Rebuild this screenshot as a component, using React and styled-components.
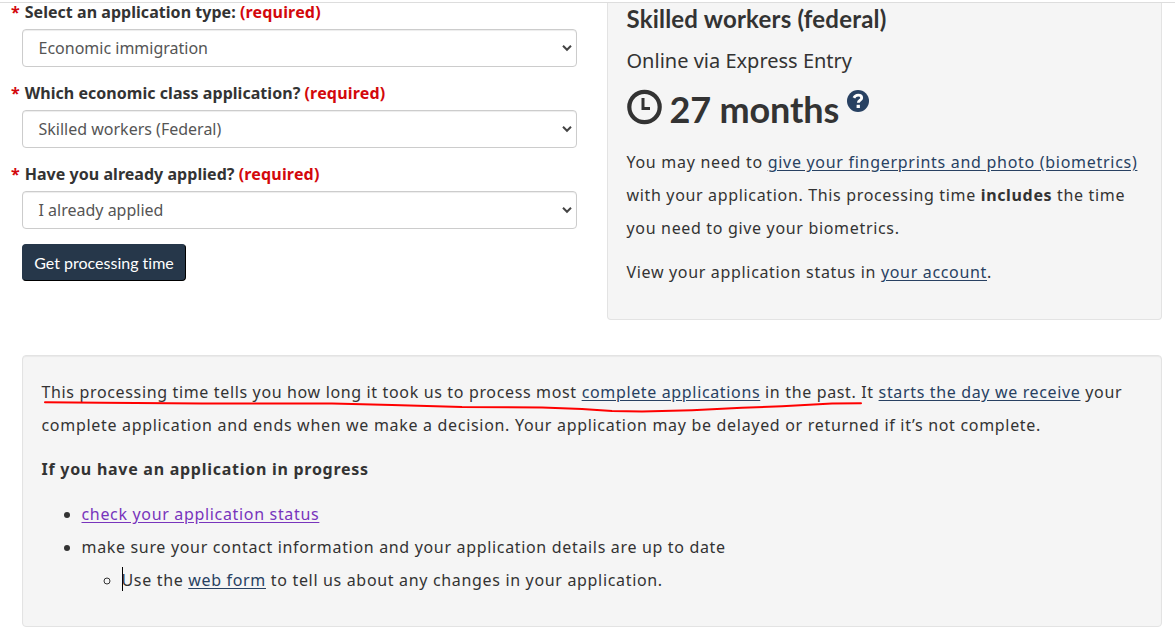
import React from 'react';
import styled, { createGlobalStyle } from 'styled-components';

const GlobalStyle = createGlobalStyle`
  * {
    box-sizing: border-box;
  }
  body {
    margin: 0;
    background-color: white;
    color: #333;
    font-family: 'Noto Sans', sans-serif;
    font-size: 16px;
    overflow: hidden;
  }
`

const Page = styled.div`
  width: 1175px;
  height: 641px;
  padding-top: 2px;
  overflow: hidden;
`

const Content = styled.main`
  border-top: 1px solid #ddd;
  padding: 0 13px 0 22px;
`

const Columns = styled.div`
  display: grid;
  grid-template-columns: 555px 555px;
  column-gap: 30px;
  height: 317px;
  margin-bottom: 35px;
`

//Form

const Form = styled.form`
  display: flex;
  flex-direction: column;
  align-items: flex-start;
`

const Field = styled.div`
  width: 100%;
  height: 81px;
`

const Label = styled.label`
  display: block;
  height: 26px;
  margin-left: -11px;
  font-weight: 700;
  line-height: 18px;
  white-space: nowrap;
  letter-spacing: 0.04px;
`

const Required = styled.span`
  color: #d3080c;
  letter-spacing: 0.18px;
`

const Star = styled.span`
  margin-right: 5px;
  color: #d3080c;
`

const SelectBox = styled.div`
  display: flex;
  align-items: center;
  justify-content: space-between;
  height: 38px;
  padding: 0 3px 0 15.5px;
  border: 1px solid #ccc;
  border-radius: 4px;
  box-shadow: inset 0 1px 1px rgba(0, 0, 0, 0.075);
  color: #555;
  background-color: white;
`

const SubmitButton = styled.button`
  width: 164px;
  height: 37px;
  margin-top: -2px;
  padding: 0 0 1px;
  border: 1px solid #26374a;
  border-right-color: black;
  border-bottom-color: black;
  border-radius: 4px;
  background-color: #26374a;
  color: white;
  font-family: Lato, sans-serif;
  font-size: 16px;
  font-variant-ligatures: none;
  white-space: nowrap;
`

//Result panels

const Panel = styled.section`
  background-color: #f5f5f5;
  border: 1px solid #e3e3e3;
  border-radius: 4px;
  box-shadow: inset 0 1px 1px rgba(0, 0, 0, 0.05);
  padding: 0 18.5px;
`

const ResultPanel = styled(Panel)`
  border-top: none;
  border-top-left-radius: 0;
  border-top-right-radius: 0;
  box-shadow: none;
`

const InfoPanel = styled(Panel)`
  height: 272px;
  padding-top: 20px;
`

const ResultTitle = styled.h2`
  margin: 0;
  font-family: Lato, sans-serif;
  font-size: 24px;
  font-weight: 700;
  line-height: 32px;
  letter-spacing: 0.2px;
`

const ResultMethod = styled.p`
  margin: 0;
  padding-top: 10px;
  font-size: 20px;
  line-height: 32px;
`

const ResultTime = styled.div`
  display: flex;
  align-items: flex-start;
  height: 69px;
  padding-top: 12px;
`

const TimeText = styled.span`
  margin: 0 8px 0 8px;
  font-family: Lato, sans-serif;
  font-size: 36px;
  font-weight: 700;
  line-height: 40px;
  letter-spacing: -0.15px;
`

const Text = styled.p`
  margin: 0 0 11px;
  line-height: 33px;
  letter-spacing: 0.67px;
  white-space: nowrap;
`

const Line = styled.span`
  letter-spacing: ${props => props.$spacing};
`

const Link = styled.a`
  color: ${props => props.$visited ? '#7834bc' : '#284162'};
  text-decoration: underline;
  text-underline-offset: 2px;
`

const List = styled.ul`
  margin: 0;
  padding-left: 40px;
  line-height: 33px;
  letter-spacing: 0.67px;
`

const MainList = styled(List)`
  margin-top: 12px;
`

const Cursor = styled.span`
  display: inline-block;
  width: 1px;
  height: 24px;
  margin-right: -1px;
  vertical-align: -5px;
  background-color: black;
`

const Marked = styled.span`
  position: relative;
`

const RedLine = styled.svg`
  position: absolute;
  left: 0;
  top: 16px;
  overflow: visible;
`

const Chevron = () => (
  <svg width="12" height="8" viewBox="0 0 12 8">
    <path d="M2 1.8 L6 5.8 L10 1.8" fill="none" stroke="#444" strokeWidth="2" />
  </svg>
)

const ClockIcon = () => (
  <svg width="35" height="36" viewBox="0 0 35 36">
    <circle cx="17.5" cy="18" r="15.2" fill="none" stroke="#333" strokeWidth="4.2" />
    <path d="M16 9 V19.5 H23" fill="none" stroke="#333" strokeWidth="3" />
  </svg>
)

const HelpIcon = () => (
  <svg width="22" height="24" viewBox="0 -1 22 24">
    <circle cx="11" cy="11" r="11" fill="#284162" />
    <path d="M6.9 7.9 C8 5.6 9.4 5.1 11.2 5.1 C13.4 5.1 14.7 6.3 14.7 7.9 C14.7 10 11.3 10.2 11.3 12.8" fill="none" stroke="white" strokeWidth="2.8" />
    <rect x="9.6" y="14.8" width="3.3" height="3.2" fill="white" />
  </svg>
)

const fields = [
  { label: 'Select an application type:', value: 'Economic immigration' },
  { label: 'Which economic class application?', value: 'Skilled workers (Federal)' },
  { label: 'Have you already applied?', value: 'I already applied' }
]

const App = () => (
  <Page>
    <GlobalStyle />
    <Content>
      <Columns>
        <Form>
          {fields.map(field => (
            <Field key={field.label}>
              <Label>
                <Star>*</Star>{field.label} <Required>(required)</Required>
              </Label>
              <SelectBox>
                {field.value}
                <Chevron />
              </SelectBox>
            </Field>
          ))}
          <SubmitButton type="button">Get processing time</SubmitButton>
        </Form>

        <ResultPanel>
          <ResultTitle>Skilled workers (federal)</ResultTitle>
          <ResultMethod>Online via Express Entry</ResultMethod>
          <ResultTime>
            <ClockIcon />
            <TimeText>27 months</TimeText>
            <HelpIcon />
          </ResultTime>
          <Text>
            <Line $spacing="0.71px">You may need to <Link>give your fingerprints and photo (biometrics)</Link></Line><br />
            <Line $spacing="0.66px">with your application. This processing time <strong>includes</strong> the time</Line><br />
            you need to give your biometrics.
          </Text>
          <Text>
            View your application status in <Link>your account</Link>.
          </Text>
        </ResultPanel>
      </Columns>

      <InfoPanel>
        <Text>
          <Line $spacing="0.65px">
            <Marked>
              This processing time tells you how long it took us to process most <Link>complete applications</Link> in the past.
              <RedLine width="820" height="14" viewBox="0 0 820 14">
                <path d="M3 5.3 L60 5.7 L160 6.5 L290 6.5 L350 8 L420 10 L500 10.5 L540 12 L570 14 L600 14.5 L650 13.2 L700 10.8 L740 9.3 L790 6.5 L819 6.2" fill="none" stroke="red" strokeWidth="2" strokeLinecap="round" strokeLinejoin="round" />
              </RedLine>
            </Marked> It <Link>starts the day we receive</Link> your
          </Line><br />
          <Line $spacing="0.69px">
            complete application and ends when we make a decision. Your application may be delayed or returned if it’s not complete.
          </Line>
        </Text>
        <Text><Line as="strong" $spacing="0.73px">If you have an application in progress</Line></Text>
        <MainList>
          <li><Link $visited>check your application status</Link></li>
          <li>
            make sure your contact information and your application details are up to date
            <List>
              <li><Cursor />Use the <Link>web form</Link> to tell us about any changes in your application.</li>
            </List>
          </li>
        </MainList>
      </InfoPanel>
    </Content>
  </Page>
)

export default App;
